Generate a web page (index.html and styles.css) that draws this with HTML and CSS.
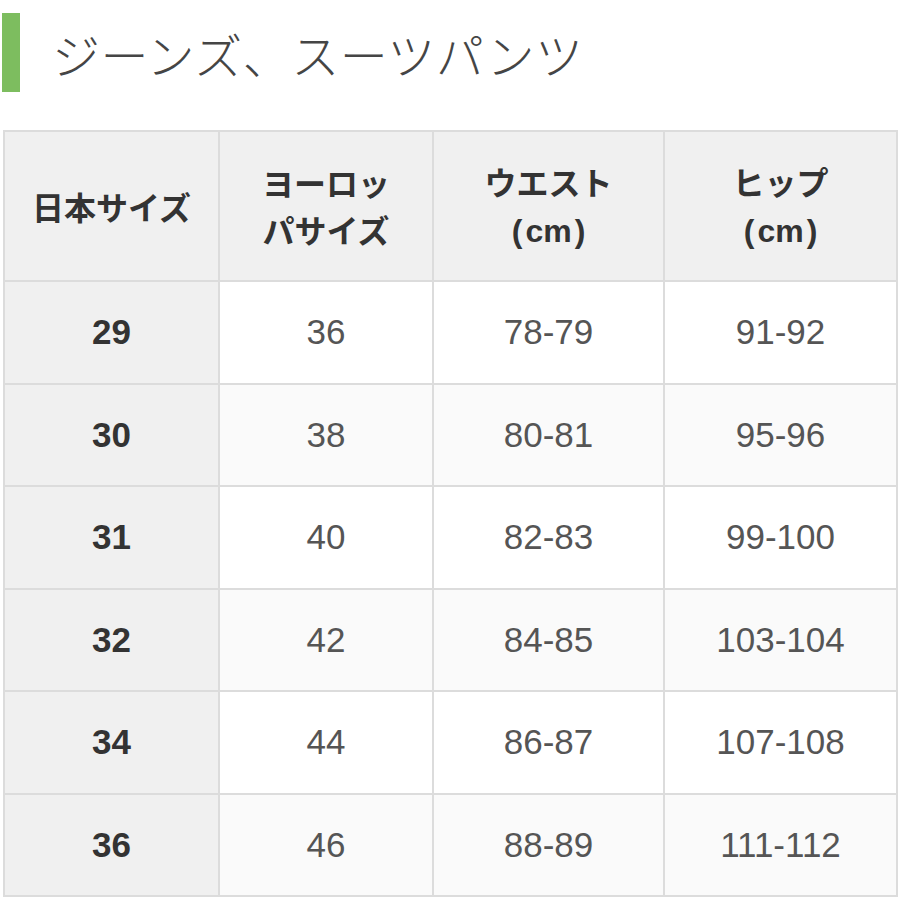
FILE: index.html
```html
<!DOCTYPE html>
<html lang="ja">
<head>
<meta charset="utf-8">
<link rel="stylesheet" href="styles.css">
</head>
<body>
<div class="heading">
  <span class="bar"></span>
  <h1 class="title">ジーンズ、スーツパンツ</h1>
</div>
<table class="size-table">
  <colgroup>
    <col class="c1"><col class="c2"><col class="c3"><col class="c4">
  </colgroup>
  <thead>
    <tr>
      <th>日本サイズ</th>
      <th>ヨーロッ<br>パサイズ</th>
      <th>ウエスト<br><span class="unit"><span class="paren">(</span>cm<span class="paren">)</span></span></th>
      <th>ヒップ<br><span class="unit"><span class="paren">(</span>cm<span class="paren">)</span></span></th>
    </tr>
  </thead>
  <tbody>
    <tr><th>29</th><td>36</td><td>78-79</td><td>91-92</td></tr>
    <tr class="alt"><th>30</th><td>38</td><td>80-81</td><td>95-96</td></tr>
    <tr><th>31</th><td>40</td><td>82-83</td><td>99-100</td></tr>
    <tr class="alt"><th>32</th><td>42</td><td>84-85</td><td>103-104</td></tr>
    <tr><th>34</th><td>44</td><td>86-87</td><td>107-108</td></tr>
    <tr class="alt"><th>36</th><td>46</td><td>88-89</td><td>111-112</td></tr>
  </tbody>
</table>
</body>
</html>
```
FILE: styles.css
```css
html, body {
  margin: 0;
  padding: 0;
  background: #ffffff;
}
body {
  font-family: "Noto Sans CJK JP", "Noto Sans", sans-serif;
  color: #444;
}
.heading {
  display: flex;
  align-items: center;
  margin: 13px 0 0 2px;
  height: 79px;
}
.bar {
  width: 18px;
  height: 79px;
  background: #7dbd5f;
  flex: none;
}
.title {
  margin: 0 0 0 32px;
  font-size: 48px;
  font-weight: 300;
  color: #454545;
  letter-spacing: 0.5px;
  line-height: 1;
}
.size-table {
  margin: 38px 0 0 3px;
  width: 893px;
  border-collapse: collapse;
  table-layout: fixed;
}
.c1 { width: 215px; }
.c2 { width: 214px; }
.c3 { width: 231px; }
.c4 { width: 233px; }
.size-table th,
.size-table td {
  border: 2px solid #dcdcdc;
  text-align: center;
  vertical-align: middle;
  padding: 0;
}
.size-table thead th {
  height: 148px;
  background: #f0f0f0;
  font-size: 32px;
  font-weight: 700;
  color: #333;
  line-height: 47px;
}
.unit {
  font-family: "Liberation Sans", "Noto Sans CJK JP", sans-serif;
}
.paren {
  display: inline-block;
  margin: 0 3px;
}
.size-table tbody tr {
  height: 102.5px;
}
.size-table tbody th,
.size-table tbody td {
  font-family: "Liberation Sans", "Noto Sans CJK JP", sans-serif;
  font-size: 35px;
}
.size-table tbody th {
  background: #f0f0f0;
  font-weight: 700;
  color: #333;
}
.size-table tbody td {
  background: #fff;
  font-weight: 400;
  color: #555;
}
.size-table tbody tr.alt td {
  background: #fafafa;
}
```
